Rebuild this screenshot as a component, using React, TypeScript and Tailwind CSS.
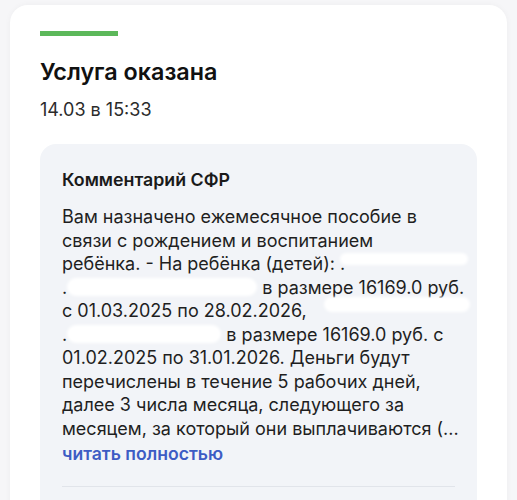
export default function App() {
  const blob = "inline-block bg-white rounded-full blur-[1.5px] align-middle";
  return (
    <div className="min-h-[500px] bg-[#f6f6f8] pt-[5px] px-[10px] font-['Inter','Noto_Sans',sans-serif] overflow-hidden h-[500px]">
      <div className="bg-white rounded-t-[18px] shadow-[0_0_6px_rgba(0,0,0,0.04)] px-[30px] pt-[26px] h-[520px]">
        <div className="w-[78px] h-[5px] bg-[#5cb85a]" />
        <h1 className="mt-[22px] text-[23.3px] leading-[28px] font-semibold text-[#111]">Услуга оказана</h1>
        <div className="mt-[13px] text-[18px] leading-[22px] text-[#2b2b2b]">14.03 в 15:33</div>

        <div className="mt-[23px] bg-[#f2f4f8] rounded-t-[16px] px-[22px] pt-[24px] pb-[30px]">
          <h2 className="text-[17.8px] leading-[24px] font-semibold text-[#1a1a1a]">Комментарий СФР</h2>
          <div className="mt-[13px] text-[18px] leading-[23.5px] text-[#1f1f1f] whitespace-nowrap">
            <div>Вам назначено ежемесячное пособие в</div>
            <div>связи с рождением и воспитанием</div>
            <div className="relative">
              ребёнка. - На ребёнка (детей): .
              <span className={`${blob} absolute left-[278px] top-[1px] w-[128px] h-[12px]`} />
            </div>
            <div>
              .<span className={`${blob} w-[190px] h-[18px] -mt-[4px]`} /> в размере 16169.0 руб.
            </div>
            <div className="relative">
              с 01.03.2025 по 28.02.2026,
              <span className={`${blob} absolute left-[262px] top-[-2px] w-[146px] h-[15px]`} />
            </div>
            <div>
              .<span className={`${blob} w-[154px] h-[18px] -mt-[4px]`} /> в размере 16169.0 руб. с
            </div>
            <div>01.02.2025 по 31.01.2026. Деньги будут</div>
            <div>перечислены в течение 5 рабочих дней,</div>
            <div>далее 3 числа месяца, следующего за</div>
            <div>месяцем, за который они выплачиваются (...</div>
          </div>
          <div className="mt-[2px] text-[17.6px] leading-[24px] font-semibold text-[#3d5cc4]">читать полностью</div>
          <div className="mt-[20px] h-px bg-[#e1e4ea]" />
        </div>
      </div>
    </div>
  );
}
